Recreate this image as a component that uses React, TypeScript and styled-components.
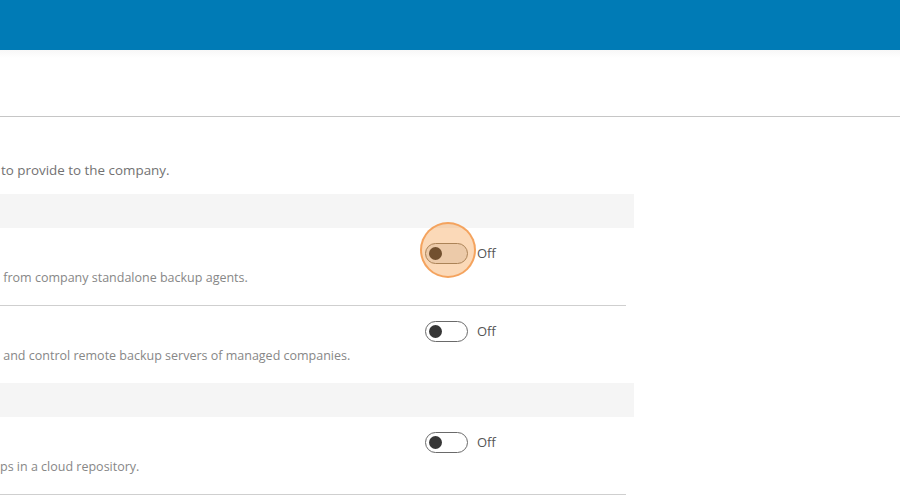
import React from 'react';
import styled, { createGlobalStyle } from 'styled-components';

interface Service {
  id: string;
  description: string;
  enabled: boolean;
  focused?: boolean;
}

interface ServiceGroup {
  id: string;
  services: Service[];
}

const groups: ServiceGroup[] = [
  {
    id: 'backup',
    services: [
      {
        id: 'agents',
        description: ' from company standalone backup agents.',
        enabled: false,
        focused: true,
      },
      {
        id: 'servers',
        description: ' and control remote backup servers of managed companies.',
        enabled: false,
      },
    ],
  },
  {
    id: 'cloud',
    services: [
      {
        id: 'repository',
        description: 'ps in a cloud repository.',
        enabled: false,
      },
    ],
  },
];

const GlobalStyle = createGlobalStyle`
  html, body {
    margin: 0;
    padding: 0;
    background: #ffffff;
    overflow: hidden;
  }

  body {
    font-family: 'Open Sans', 'Liberation Sans', sans-serif;
  }
`;

const Page = styled.div`
  width: 900px;
  height: 502px;
  overflow: hidden;
`;

const Header = styled.header`
  height: 50px;
  background-color: #007bb6;
`;

const Toolbar = styled.div`
  height: 66px;
  border-bottom: 1px solid #c6c6c6;
  background: linear-gradient(#f7f7f7 0, #ffffff 8px);
`;

const Content = styled.main`
  padding-top: 44px;
`;

const Intro = styled.p`
  margin: 0;
  padding-left: 1px;
  font-size: 13.4px;
  line-height: 18px;
  color: #727272;
  white-space: pre;
`;

const Section = styled.section`
  width: 634px;
  margin-top: 15px;
`;

const GroupBand = styled.div`
  height: 34px;
  background-color: #f5f5f5;
`;

const Row = styled.div<{ $divider: boolean }>`
  display: grid;
  grid-template-columns: 425px auto;
  grid-template-rows: 22px auto;
  row-gap: 6px;
  width: 626px;
  height: 63px;
  padding-top: 14px;
  border-bottom: ${props => (props.$divider ? '1px solid #cfcfcf' : 'none')};
`;

const Description = styled.div`
  grid-column: 1 / span 2;
  font-size: 12.5px;
  line-height: 16px;
  color: #878787;
  white-space: pre;
`;

const SwitchCell = styled.label`
  grid-column: 2;
  position: relative;
  display: flex;
  align-items: center;
  gap: 9px;
  cursor: pointer;
`;

const Track = styled.span<{ $focused: boolean }>`
  display: block;
  position: relative;
  width: 43px;
  height: 21px;
  box-sizing: border-box;
  border: 1px solid ${props => (props.$focused ? '#8a8070' : '#6a6a6a')};
  border-radius: 11px;
  background-color: ${props => (props.$focused ? '#e9e9e9' : '#ffffff')};
`;

const Knob = styled.span`
  position: absolute;
  top: 3px;
  left: 3px;
  width: 13px;
  height: 13px;
  border-radius: 50%;
  background-color: #363636;
`;

const FocusRing = styled.span`
  position: absolute;
  left: -5px;
  top: calc(50% - 3px);
  width: 56px;
  height: 56px;
  box-sizing: border-box;
  transform: translateY(-50%);
  border: 2px solid rgba(243, 160, 90, 0.95);
  border-radius: 50%;
  background-color: rgba(244, 138, 34, 0.32);
  pointer-events: none;
`;

const StateText = styled.span`
  font-size: 13px;
  color: #555555;
`;

const ServiceSwitch = ({ service }: { service: Service }) => (
  <SwitchCell>
    <Track $focused={!!service.focused}>
      <Knob />
    </Track>
    {service.focused && <FocusRing />}
    <StateText>{service.enabled ? 'On' : 'Off'}</StateText>
  </SwitchCell>
);

export default function App() {
  return (
    <Page>
      <GlobalStyle />
      <Header />
      <Toolbar />
      <Content>
        <Intro>to provide to the company.</Intro>
        <Section>
          {groups.map(group => (
            <div key={group.id}>
              <GroupBand />
              {group.services.map((service, index) => (
                <Row key={service.id} $divider={group.id === 'cloud' || index === 0}>
                  <ServiceSwitch service={service} />
                  <Description>{service.description}</Description>
                </Row>
              ))}
            </div>
          ))}
        </Section>
      </Content>
    </Page>
  );
}
